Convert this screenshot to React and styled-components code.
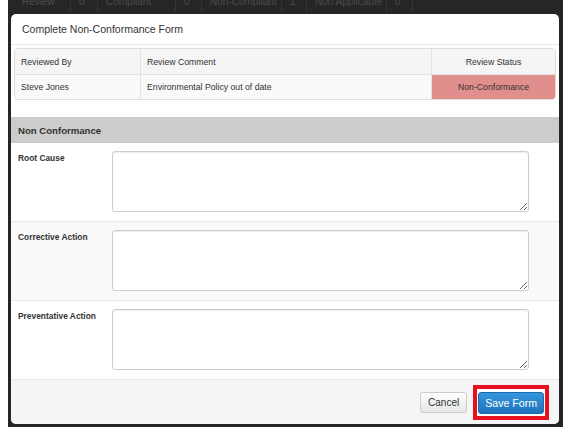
import React from 'react'
import styled, { createGlobalStyle } from 'styled-components'

const GlobalStyle = createGlobalStyle`
  body {
    margin: 0;
    background: #fff;
    font-family: "Liberation Sans", Arial, sans-serif;
    color: #333;
  }
`;

const Page = styled.div`
  padding-left: 8px;
`;

const Backdrop = styled.div`
  width: 555px;
  height: 427px;
  background-color: #262626;
  overflow: hidden;
  display: flex;
  flex-direction: column;
`;

const BackStrip = styled.div`
  height: 14px;
  overflow: hidden;
  display: flex;
  padding-left: 6px;
  font-size: 10px;
  color: #4c4c4c;
`;

const BackCell = styled.div`
  width: ${p => p.w}px;
  margin-top: -8px;
  padding-left: 8px;
  border-right: 1px solid #333;
  box-sizing: border-box;
  height: 20px;
  line-height: 20px;
`;

const Modal = styled.div`
  margin-left: 3px;
  width: 548px;
  background: #fff;
  border-radius: 5px;
  overflow: hidden;
  display: flex;
  flex-direction: column;
`;

const Header = styled.div`
  height: 30px;
  border-bottom: 1px solid #e5e5e5;
  padding: 0 11px;
  display: flex;
  align-items: center;
  font-size: 10.5px;
  color: #333;
`;

const TableWrap = styled.div`
  padding: 3px 3px 0;
`;

const Table = styled.table`
  width: 100%;
  border-collapse: separate;
  border-spacing: 0;
  border: 1px solid #dddddd;
  border-radius: 4px;
  overflow: hidden;
  font-size: 8.7px;
  table-layout: fixed;
`;

const Col = styled.col`
  width: ${p => (p.w ? p.w + 'px' : 'auto')};
`;

const Th = styled.th`
  height: 25px;
  background: #f5f5f5;
  font-weight: normal;
  text-align: ${p => (p.center ? 'center' : 'left')};
  padding: 0 6px;
  border-bottom: 1px solid #e2e2e2;
  border-right: ${p => (p.last ? 'none' : '1px solid #e2e2e2')};
`;

const Td = styled.td`
  height: 24px;
  background: ${p => (p.status ? '#e08f8c' : '#f9f9f9')};
  text-align: ${p => (p.center ? 'center' : 'left')};
  padding: 0 6px;
  border-right: ${p => (p.last ? 'none' : '1px solid #e2e2e2')};
`;

const SectionTitle = styled.div`
  margin-top: 17px;
  height: 26px;
  background: #cccccc;
  padding-left: 7px;
  display: flex;
  align-items: center;
  font-size: 9.6px;
  font-weight: bold;
`;

const FieldRow = styled.div`
  display: grid;
  grid-template-columns: 94px 417px;
  padding: 8px 0 9px 7px;
  border-bottom: 1px solid #e8e8e8;
  background: ${p => (p.alt ? '#f9f9f9' : '#fff')};
`;

const Label = styled.label`
  font-size: 8.4px;
  font-weight: bold;
  padding-top: 2px;
`;

const TextArea = styled.textarea`
  height: 61px;
  box-sizing: border-box;
  border: 1px solid #cccccc;
  border-radius: 3px;
  box-shadow: inset 0 1px 1px rgba(0, 0, 0, 0.075);
  resize: vertical;
  background: #fff;
  margin: 0;
`;

const Footer = styled.div`
  height: 44px;
  background: #f5f5f5;
  display: flex;
  justify-content: flex-end;
  align-items: center;
  gap: 6px;
  padding-right: 10px;
`;

const Button = styled.button`
  height: ${p => (p.primary ? 22 : 21)}px;
  padding: 0 ${p => (p.primary ? 6 : 7)}px;
  border-radius: 3px;
  font-family: "Liberation Sans", Arial, sans-serif;
  font-size: ${p => (p.primary ? 10.6 : 10)}px;
  cursor: pointer;
  color: ${p => (p.primary ? '#fff' : '#333')};
  border: 1px solid ${p => (p.primary ? '#1b6aaa' : '#cccccc')};
  background: ${p =>
    p.primary
      ? 'linear-gradient(#3596dd, #1f74bd)'
      : 'linear-gradient(#ffffff, #e6e6e6)'};
`;

const Highlight = styled.span`
  display: inline-flex;
  border: 4px solid #e8101e;
  background: #fff;
  padding: 3px 1px 2px;
`;

const fields = ['Root Cause', 'Corrective Action', 'Preventative Action'];

const backCells = [
  ['Review', 57], ['0', 27], ['Compliant', 78], ['0', 26],
  ['Non-Compliant', 80], ['1', 25], ['Non Applicable', 80], ['0', 26],
];

const App = () => {
  return (
    <Page>
      <GlobalStyle />
      <Backdrop>
        <BackStrip>
          {backCells.map(([t, w], i) => (
            <BackCell key={i} w={w}>{t}</BackCell>
          ))}
        </BackStrip>
        <Modal>
          <Header>Complete Non-Conformance Form</Header>
          <TableWrap>
            <Table>
              <colgroup>
                <Col w={126} />
                <Col w={291} />
                <Col />
              </colgroup>
              <thead>
                <tr>
                  <Th>Reviewed By</Th>
                  <Th>Review Comment</Th>
                  <Th center last>Review Status</Th>
                </tr>
              </thead>
              <tbody>
                <tr>
                  <Td>Steve Jones</Td>
                  <Td>Environmental Policy out of date</Td>
                  <Td center last status>Non-Conformance</Td>
                </tr>
              </tbody>
            </Table>
          </TableWrap>
          <SectionTitle>Non Conformance</SectionTitle>
          {fields.map((f, i) => (
            <FieldRow key={f} alt={i === 1}>
              <Label>{f}</Label>
              <TextArea />
            </FieldRow>
          ))}
          <Footer>
            <Button>Cancel</Button>
            <Highlight>
              <Button primary>Save Form</Button>
            </Highlight>
          </Footer>
        </Modal>
      </Backdrop>
    </Page>
  )
}

export default App
